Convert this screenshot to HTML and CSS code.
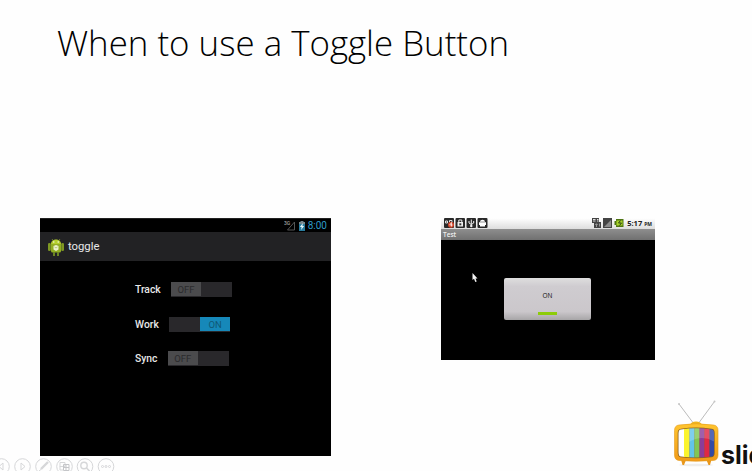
FILE: index.html
```html
<!DOCTYPE html>
<html lang="en">
<head>
<meta charset="utf-8">
<title>When to use a Toggle Button</title>
<link rel="stylesheet" href="styles.css">
</head>
<body>
<main class="slide">
  <h1 class="title"><span class="title-text">When to use a Toggle Button</span></h1>
  <div class="content">
    <div class="left">
      <section class="holo">
        <div class="holo-status">
          <svg class="signal" width="12" height="12" viewBox="0 0 12 12"><path d="M3.5 10 10.500 2v8z" fill="none" stroke="#555"/><text x="0" y="5" class="three-g">3G</text></svg>
          <svg width="6" height="10" viewBox="0 0 7 10" preserveAspectRatio="none"><path d="M2 0h3v1h2v9H0V1h2z" fill="#287b9d"/><path d="M0 1h2V0h3v1h2v2H0z" fill="#75858b"/><path d="M4.5 2 1 6h2L2.5 9 6 5H4z" fill="#e2f5fb"/></svg>
          <span class="holo-time">8:00</span>
        </div>
        <div class="holo-bar">
          <svg width="16" height="18" viewBox="0 0 16 18">
            <path d="M4 1 5.500 3M12 1 10.500 3" stroke="#788c35" stroke-width=".8"/>
            <rect x="0" y="5" width="2.800" height="8" rx="1.300" fill="#7e9823"/><rect x="13.200" y="5" width="2.800" height="8" rx="1.300" fill="#7e9823"/>
            <path d="M3 6C3 0 13 0 13 6z" fill="#b4ce2e"/>
            <path d="M3 6h10V13q0 1.500-1.500 1.500H4.500Q3 14.500 3 13z" fill="#91ad23"/>
            <path d="M5 14h2v4H5zM9 14h2v4H9z" fill="#6c8523"/>
            <circle cx="5.800" cy="4" r=".7" fill="#fff"/><circle cx="10.200" cy="4" r=".7" fill="#fff"/>
            <path d="M8 7 10.500 8v3.500L8 13 5.500 11.500V8z" fill="#edf3cf"/><path d="m6.500 9 1.500 1 1.500-1" fill="none" stroke="#9eb358" stroke-width=".7"/>
          </svg>
          <span class="holo-title">toggle</span>
        </div>
        <div class="rows">
          <div class="row"><span>Track</span><span class="switch"><b class="thumb">OFF</b></span></div>
          <div class="row"><span>Work</span><span class="switch on"><b class="thumb">ON</b></span></div>
          <div class="row"><span>Sync</span><span class="switch"><b class="thumb">OFF</b></span></div>
        </div>
      </section>
      <nav class="controls">
        <svg width="116" height="15" viewBox="0 0 116 15" fill="none" stroke="#d6d7d9">
          <circle cx="1.500" cy="10.500" r="7.800"/><circle cx="22.500" cy="10.500" r="7.800"/><circle cx="43.500" cy="10.500" r="7.800"/><circle cx="64.500" cy="10.500" r="7.800"/><circle cx="85" cy="10.500" r="7.800"/><circle cx="106" cy="10.500" r="7.800"/>
          <path d="M3 7-1 10.500 3 14z"/><path d="m21 7 4 3.500-4 3.500z"/>
          <path d="m41 13 7-7" stroke-width="2.400"/><path d="m39 15 2.500-2"/>
          <path d="M60 6.500h5v4h-5zM60 10v4h3" /><path d="M63.500 8.500h5.500v6h-5.500zM66 8.500v6M63.500 11.500H69" stroke="#c5c6c9"/>
          <circle cx="84" cy="9.500" r="3.200" stroke-width="1.400"/><path d="m86.500 12 3 3" stroke-width="1.600"/>
          <circle cx="102.500" cy="10.500" r="1"/><circle cx="106" cy="10.500" r="1"/><circle cx="109.500" cy="10.500" r="1"/>
        </svg>
      </nav>
    </div>
    <section class="classic">
      <div class="classic-status">
        <svg width="45" height="10" viewBox="0 0 45 10">
          <g fill="#292929"><rect width="10" height="10" rx="1"/><rect x="11.500" width="9.500" height="10" rx="1"/><rect x="22.500" width="9.500" height="10" rx="1"/><rect x="33.500" width="10" height="10" rx="1"/></g>
          <path d="M1.500 5V3h2v2zM5.500 4V2.500H8V4" fill="none" stroke="#ddd"/><circle cx="7" cy="6.700" r="3" fill="#d5472c"/><path d="M7.500 8.500v-4L5.700 7h3" fill="none" stroke="#fff" stroke-width=".7"/>
          <path d="M13.500 4h5.500v4.500h-5.500z" fill="#eee"/><path d="M14.800 4V2h3v2" fill="none" stroke="#eee"/><path d="M15.300 5.300h2v2h-2z" fill="#333"/>
          <path d="M27.300 1.500v7M25 3v2l2.300 1.500L29.700 5V3" fill="none" stroke="#eee"/><circle cx="27.300" cy="8" r="1.200" fill="#eee"/>
          <path d="M36 3.800C36 1 41 1 41 3.800zM35 4.300h7V7h-1v1.500h-5V7h-1z" fill="#fff"/>
        </svg>
        <div class="classic-right">
          <svg width="32" height="10" viewBox="0 0 32 10">
            <path d="M0 0h7v4h2v6H2V5H0z" fill="#444"/><path d="M1 1.500h2.500M1 3h2.500M5 1.500h1.500M5 3h1.500" stroke="#ddd"/><path d="M4.500 9V6M3.200 7l1.300-1.300L5.700 7M7.500 5.500v3" fill="none" stroke="#aaa" stroke-width=".8"/>
            <rect x="11" width="9" height="10" fill="#444"/><path d="M12 9h7V2z" fill="#8b8b8b"/>
            <path d="M24 1h7.500v8H24V7h-1.500V3H24z" fill="#4e7412"/><path d="M24.500 2.500h6v5h-6z" fill="#a8d329"/><path d="m28.500 2.500-2 2.500h3l-2 2.500" stroke="#2d4214" fill="none"/>
          </svg>
          <span class="classic-time">5:17 <small>PM</small></span>
        </div>
      </div>
      <div class="classic-title">Test</div>
      <div class="classic-body">
        <div class="toggle"><span>ON</span><i class="led"></i></div>
        <svg class="cursor" width="6" height="9" viewBox="0 0 6 9"><path d="M.5 0v7l1.500-1.300L3.300 9l1.400-.6L3.500 5.500h2z" fill="#f4f4f4"/></svg>
      </div>
    </section>
    <div class="brand">
      <svg width="48" height="67" viewBox="0 0 48 67">
        <defs>
          <linearGradient id="wood" x2="0" y2="1"><stop stop-color="#ffc52e"/><stop offset=".55" stop-color="#f8ad22"/><stop offset="1" stop-color="#f09a18"/></linearGradient>
          <clipPath id="screen"><path d="M9 29.500Q24 27 39.500 29.500q2.500 0 2.500 4V52q0 4.500-2.500 4.500Q24 58.500 9 56.500q-2.500 0-2.500-4.500V33.500q0-4 2.500-4z"/></clipPath>
        </defs>
        <ellipse cx="24" cy="65" rx="17" ry="1.300" fill="#eee"/>
        <path d="M22 24 7 4M26 24 42.500 1.500" stroke="#aaa" stroke-width=".8"/><circle cx="7" cy="4" r="1" fill="#c5c5c5"/><circle cx="42.500" cy="1.500" r="1" fill="#c5c5c5"/>
        <path d="M18 25q1-3.500 6-3.500T30 25z" fill="#efb41d"/>
        <path d="M9 59.500 10.500 65H12l2-5zM34.500 60l2 5H38l1.500-5.500z" fill="#e9971b"/>
        <path d="M7 25Q24 22.500 41.500 25q4.500.5 4.500 5.500V55q0 5-4.500 5.500Q24 62 7 60.500 2.500 60 2.500 55V30.500Q2.500 25.500 7 25z" fill="url(#wood)" stroke="#e49a1d" stroke-width=".6"/>
        <path d="M9 28.700Q24 26.200 39.500 28.700q3.200 0 3.200 4.300V52.500q0 4.500-3.200 4.800Q24 59.300 9 57.300 5.700 57 5.700 52.500V33q0-4 3.300-4.300z" fill="#8d6320"/>
        <g clip-path="url(#screen)"><path d="M6 27h7v32H6z" fill="#fff"/><path d="M12 27h5.500v32H12z" fill="#fbf42d"/><path d="M17.500 27h5v32h-5z" fill="#63c4e8"/><path d="M22.500 27h5v32h-5z" fill="#82c653"/><path d="M27.500 27h5v32h-5z" fill="#8c3c99"/><path d="M32.500 27h5v32h-5z" fill="#df2844"/><path d="M37.500 27H43v32h-5.500z" fill="#3349a4"/><path d="M17 27h26v15Q30 34 17 42z" fill="#fff" opacity=".18"/></g>
      </svg>
      <span class="brand-text">slid</span>
    </div>
  </div>
</main>
</body>
</html>
```
FILE: styles.css
```css
* { box-sizing: border-box; }
body { margin: 0; background: #fefefe; font-family: Roboto, "Liberation Sans", sans-serif; }
svg { display: block; flex: none; }
.slide { width: 752px; height: 471px; overflow: hidden; background: #fefefe; }
.title { margin: 0; height: 218px; padding: 18px 0 0 57px; font: 300 35px/50px "Open Sans", sans-serif; color: #000; white-space: nowrap; }
.title-text { display: inline-block; transform: scaleX(.996); transform-origin: left; }
.content { display: flex; height: 253px; align-items: flex-start; }
.left { width: 331px; flex: none; }
.holo { margin-left: 40px; width: 291px; height: 238px; background: #000; color: #e8e8e8; border-top: 1px solid #222; }
.holo-status { height: 13px; display: flex; justify-content: flex-end; align-items: center; padding-right: 4px; gap: 3px; }
.three-g { font: 700 5px Roboto, sans-serif; fill: #888; }
.holo-time { font-size: 10px; line-height: 12px; color: #2c9bc8; }
.holo-bar { height: 29px; background: #222224; display: flex; align-items: center; padding-left: 8px; gap: 4px; }
.holo-title { font-size: 11.3px; }
.rows { padding: 21px 0 0 95px; display: flex; flex-direction: column; gap: 19.500px; }
.row { display: flex; align-items: center; height: 15px; font-size: 10.300px; font-weight: 500; gap: 10.300px; }
.switch { display: flex; width: 61px; height: 15px; background: #29282b; }
.switch.on { justify-content: flex-end; }
.thumb { width: 30px; height: 14px; background: #4b4b4d; color: #2a2a2c; font: 400 9.500px/15px Roboto, sans-serif; text-align: center; }
.on .thumb { background: #1688b9; color: #105875; }
.controls { height: 15px; }
.classic { flex: none; margin-left: 110px; width: 214px; height: 142px; background: #000; }
.classic-status { height: 11px; display: flex; justify-content: space-between; padding: 0 3px; background: linear-gradient(#fff, #ddd); }
.classic-right { display: flex; gap: 3px; }
.classic-time { font: 700 7.500px/11px "Open Sans", sans-serif; color: #222; white-space: nowrap; }
.classic-time small { font-size: 5px; }
.classic-title { height: 11px; padding-left: 2px; font: 600 6.500px/11px "Open Sans", sans-serif; color: #eee; background: linear-gradient(#8e8e8e, #707070); }
.classic-body { height: 120px; display: flex; justify-content: center; padding-top: 38px; position: relative; }
.toggle { width: 87px; height: 42px; margin-right: 1px; border-radius: 2px; background: linear-gradient(#dedede, #cfccd0 20%, #cbc7cb 80%, #a7a5a7); display: flex; flex-direction: column; align-items: center; padding-top: 14px; gap: 12px; font: 400 6.500px/8px "Open Sans", sans-serif; color: #111; }
.led { width: 19px; height: 3px; background: #8dcc09; }
.cursor { position: absolute; left: 31px; top: 33px; }
.brand { flex: none; display: flex; margin: 182px 0 0 17px; height: 71px; width: 80px; overflow: hidden; }
.brand-text { margin: 42px 0 0 1px; font: 700 25px/26px Inter, sans-serif; color: #111; }
```
